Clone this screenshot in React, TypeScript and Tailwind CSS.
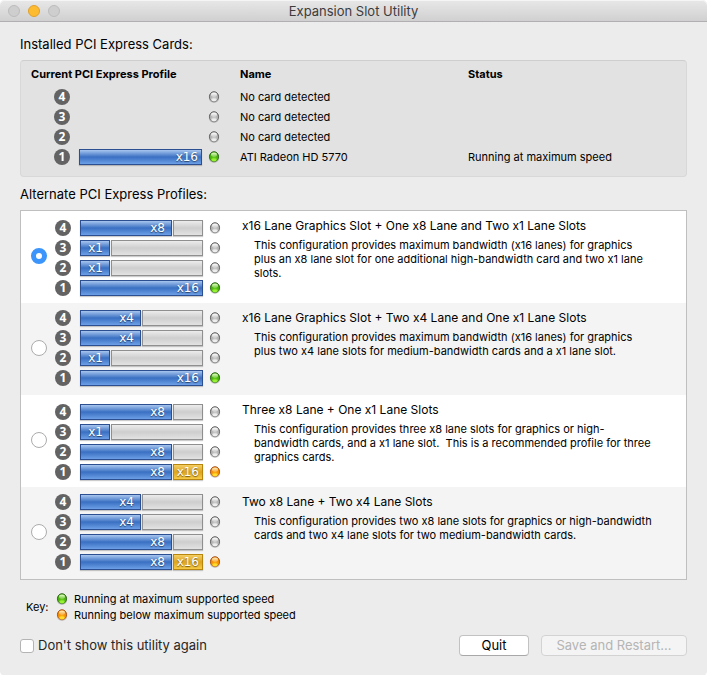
import clsx from "clsx";

type LedColor = "off" | "green" | "amber";
type Lane = { kind: "blue" | "gray" | "gold"; size: "quarter" | "half" | "rest"; label?: string };
type Slot = { slot: number; lanes: Lane[]; led: LedColor };
type Profile = { title: string; text: string; slots: Slot[] };

const full: Lane[] = [{ kind: "blue", size: "rest", label: "x16" }];
const x8: Lane[] = [
    { kind: "blue", size: "rest", label: "x8" },
    { kind: "gray", size: "quarter" },
];
const x4: Lane[] = [
    { kind: "blue", size: "half", label: "x4" },
    { kind: "gray", size: "rest" },
];
const x1: Lane[] = [
    { kind: "blue", size: "quarter", label: "x1" },
    { kind: "gray", size: "rest" },
];
const limited: Lane[] = [
    { kind: "blue", size: "rest", label: "x8" },
    { kind: "gold", size: "quarter", label: "x16" },
];

const cards = [
    { slot: 4, name: "No card detected", status: "", lanes: [], led: "off" },
    { slot: 3, name: "No card detected", status: "", lanes: [], led: "off" },
    { slot: 2, name: "No card detected", status: "", lanes: [], led: "off" },
    { slot: 1, name: "ATI Radeon HD 5770", status: "Running at maximum speed", lanes: full, led: "green" },
] as (Slot & { name: string; status: string })[];

const profiles: Profile[] = [
    {
        title: "x16 Lane Graphics Slot + One x8 Lane and Two x1 Lane Slots",
        text: "This configuration provides maximum bandwidth (x16 lanes) for graphics plus an x8 lane slot for one additional high-bandwidth card and two x1 lane slots.",
        slots: [
            { slot: 4, lanes: x8, led: "off" },
            { slot: 3, lanes: x1, led: "off" },
            { slot: 2, lanes: x1, led: "off" },
            { slot: 1, lanes: full, led: "green" },
        ],
    },
    {
        title: "x16 Lane Graphics Slot + Two x4 Lane and One x1 Lane Slots",
        text: "This configuration provides maximum bandwidth (x16 lanes) for graphics plus two x4 lane slots for medium-bandwidth cards and a x1 lane slot.",
        slots: [
            { slot: 4, lanes: x4, led: "off" },
            { slot: 3, lanes: x4, led: "off" },
            { slot: 2, lanes: x1, led: "off" },
            { slot: 1, lanes: full, led: "green" },
        ],
    },
    {
        title: "Three x8 Lane + One x1 Lane Slots",
        text: "This configuration provides three x8 lane slots for graphics or high-bandwidth cards, and a x1 lane slot.\u00a0 This is a recommended profile for three graphics cards.",
        slots: [
            { slot: 4, lanes: x8, led: "off" },
            { slot: 3, lanes: x1, led: "off" },
            { slot: 2, lanes: x8, led: "off" },
            { slot: 1, lanes: limited, led: "amber" },
        ],
    },
    {
        title: "Two x8 Lane + Two x4 Lane Slots",
        text: "This configuration provides two x8 lane slots for graphics or high-bandwidth cards and two x4 lane slots for two medium-bandwidth cards.",
        slots: [
            { slot: 4, lanes: x4, led: "off" },
            { slot: 3, lanes: x4, led: "off" },
            { slot: 2, lanes: x8, led: "off" },
            { slot: 1, lanes: limited, led: "amber" },
        ],
    },
];

const laneKinds = {
    blue: "border-[#2c4f92] bg-linear-to-b from-[#a8c6ee] via-[#3a70c2] via-50% to-[#6c9fe6]",
    gray: "border-[#8f8f8f] bg-linear-to-b from-[#ececec] via-[#cecece] via-50% to-[#e2e2e2]",
    gold: "border-[#b8860f] bg-linear-to-b from-[#f3cf62] via-[#dca41c] via-50% to-[#f6cb45]",
};
const laneSizes = { quarter: "w-[30px]", half: "w-[61px]", rest: "flex-1" };

const ledColors = {
    off: ["#4c4c4c", "#b0b0b0", "#f0f0f0", "#ffffff"],
    green: ["#1c5208", "#45b00a", "#9cf436", "#e4ffc4"],
    amber: ["#9c3c06", "#f58a00", "#ffe030", "#fff0c0"],
};

const Led = ({ color }: { color: LedColor }) => {
    const [edge, mid, glow, shine] = ledColors[color];
    return (
        <svg className="h-3 w-3 shrink-0" viewBox="0 0 12 12" aria-hidden="true">
            <defs>
                <linearGradient id={"led-edge-" + color} x1="0" y1="0" x2="0" y2="1">
                    <stop offset="0" stopColor={edge} />
                    <stop offset="1" stopColor={edge} stopOpacity="0.5" />
                </linearGradient>
                <radialGradient id={"led-fill-" + color} cx="0.5" cy="0.85" r="0.75">
                    <stop offset="0" stopColor={glow} />
                    <stop offset="0.6" stopColor={mid} />
                    <stop offset="1" stopColor={mid} />
                </radialGradient>
                <linearGradient id={"led-shine-" + color} x1="0" y1="0" x2="0" y2="1">
                    <stop offset="0" stopColor={shine} />
                    <stop offset="1" stopColor={shine} stopOpacity="0.3" />
                </linearGradient>
            </defs>
            <ellipse cx="6" cy="6.9" rx="5.2" ry="5.1" fill="#000" opacity="0.15" />
            <ellipse
                cx="6"
                cy="5.8"
                rx="4.6"
                ry="5"
                fill={`url(#led-fill-${color})`}
                stroke={`url(#led-edge-${color})`}
            />
            <ellipse cx="6" cy="3.7" rx="3" ry="2.2" fill={`url(#led-shine-${color})`} />
            <ellipse cx="6" cy="8.8" rx="2.6" ry="1.4" fill={glow} opacity="0.8" />
        </svg>
    );
};

const LaneBar = ({ lanes }: { lanes: Lane[] }) => (
    <div className="flex h-4 w-[123px] gap-px">
        {lanes.map((lane, i) => (
            <div
                key={i}
                className={clsx(
                    "flex items-center justify-end border font-['DejaVu_Sans'] text-xs leading-none text-white shadow-[0_1px_1px_rgba(0,0,0,0.2)] text-shadow-[0_1px_1px_rgba(0,0,0,0.5)]",
                    lane.label === "x16" ? "pr-[3px]" : "pr-[6px]",
                    laneKinds[lane.kind],
                    laneSizes[lane.size],
                )}
            >
                {lane.label}
            </div>
        ))}
    </div>
);

const SlotRow = ({ slot, lanes, led }: Slot) => (
    <div className="flex h-5 items-center">
        <span className="mr-[9px] flex h-4 w-4 items-center justify-center rounded-full bg-[#636363] font-['Noto_Sans'] text-xs leading-none font-bold text-white">
            {slot}
        </span>
        <LaneBar lanes={lanes} />
        <span className="ml-[6px] flex">
            <Led color={led} />
        </span>
    </div>
);

const TitleBar = () => (
    <header className="relative flex h-[22px] items-center justify-center rounded-t-[5px] border-b border-[#b1afb1] bg-linear-to-b from-[#e9e8e9] to-[#d1d0d1] inset-shadow-[0_1px_0_#f5f5f5]">
        <div className="absolute left-2 flex gap-2">
            <button aria-label="Close" className="h-3 w-3 rounded-full border border-[#bdbcbd] bg-[#cfcecf]" />
            <button aria-label="Minimize" className="h-3 w-3 rounded-full border border-[#e0a02c] bg-[#fdbc2f]" />
            <button aria-label="Zoom" className="h-3 w-3 rounded-full border border-[#bdbcbd] bg-[#cfcecf]" />
        </div>
        <h1 className="pt-px text-[13px] leading-5 text-[#3c3c3c]">Expansion Slot Utility</h1>
    </header>
);

const CardTable = () => (
    <div className="mt-2 rounded-[4px] border border-[#d8d8d8] border-t-[#cecece] bg-[#e2e2e2] pt-[5px] pb-[9px]">
        <table className="w-full table-fixed text-left text-[11px]">
            <thead>
                <tr className="h-[21px] align-top leading-4 font-bold">
                    <th className="w-[219px] pl-[10px]">Current PCI Express Profile</th>
                    <th className="w-[228px]">Name</th>
                    <th>Status</th>
                </tr>
            </thead>
            <tbody>
                {cards.map((card) => (
                    <tr key={card.slot} className="h-5">
                        <td className="pl-[33px]">
                            <SlotRow slot={card.slot} lanes={card.lanes} led={card.led} />
                        </td>
                        <td>{card.name}</td>
                        <td>{card.status}</td>
                    </tr>
                ))}
            </tbody>
        </table>
    </div>
);

const ProfileList = () => (
    <div className="mt-2 border border-[#bfbfbf] bg-white">
        {profiles.map((profile, i) => (
            <label key={profile.title} className="group flex min-h-[92px] even:bg-[#f4f4f4]">
                <input
                    type="radio"
                    name="profile"
                    defaultChecked={i === 0}
                    className="mr-2 mb-[2px] ml-[10px] h-4 w-4 shrink-0 appearance-none self-center rounded-full border border-[#acacac] bg-white checked:border-[5px] checked:border-[#3b95fb]"
                />
                <div className="shrink-0 pt-[7px] group-even:pt-[5px]">
                    {profile.slots.map((slot) => (
                        <SlotRow key={slot.slot} {...slot} />
                    ))}
                </div>
                <div className="pt-[7px] pr-6 pl-[21px]">
                    <div className="text-xs leading-4">{profile.title}</div>
                    <p className="mt-1 max-w-[412px] pl-3 text-[11px] leading-[14px]">{profile.text}</p>
                </div>
            </label>
        ))}
    </div>
);

const buttonStyle = "h-[21px] rounded-[4px] border text-[13px] leading-none";

const App = () => (
    <div className="min-h-screen rounded-[5px] bg-[#ececec] font-[Inter,'Liberation_Sans',sans-serif] text-black">
        <TitleBar />
        <main className="px-5 pt-[14px]">
            <h2 className="text-[13px] leading-4">Installed PCI Express Cards:</h2>
            <CardTable />
            <h2 className="mt-[9px] text-[13px] leading-4">Alternate PCI Express Profiles:</h2>
            <ProfileList />
            <div className="mt-[11px] flex items-center pl-[6px] text-[11px] leading-4">
                <span className="w-[30px]">Key:</span>
                <ul>
                    <li className="flex items-center gap-[6px]">
                        <Led color="green" />
                        Running at maximum supported speed
                    </li>
                    <li className="flex items-center gap-[6px]">
                        <Led color="amber" />
                        Running below maximum supported speed
                    </li>
                </ul>
            </div>
            <footer className="mt-3 flex items-center gap-3 pb-5">
                <label className="mr-auto flex items-center gap-1 text-[13px] text-[#262626]">
                    <input
                        type="checkbox"
                        className="h-[14px] w-[14px] appearance-none rounded-[3px] border border-[#b4b4b4] bg-white checked:bg-[#3b95fb]"
                    />
                    Don't show this utility again
                </label>
                <button className={clsx(buttonStyle, "w-[70px] border-[#c2c2c2] border-b-[#a8a8a8] bg-white")}>
                    Quit
                </button>
                <button
                    disabled
                    className={clsx(buttonStyle, "w-[146px] border-[#d3d3d3] bg-[#f4f4f4] text-[#b5b5b5]")}
                >
                    Save and Restart...
                </button>
            </footer>
        </main>
    </div>
);

export default App;
